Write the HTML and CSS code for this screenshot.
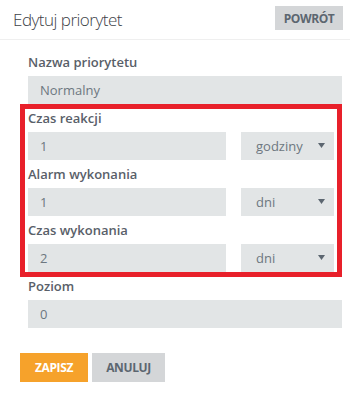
FILE: index.html
```html
<!DOCTYPE html>
<html lang="pl">
<head>
<meta charset="utf-8">
<title>Edytuj priorytet</title>
<link rel="stylesheet" href="styles.css">
</head>
<body>
<div class="panel">
  <div class="header">
    <h1 class="title">Edytuj priorytet</h1>
    <button class="btn btn-back" type="button">POWRÓT</button>
  </div>
  <form class="form">
    <div class="field">
      <label class="label">Nazwa priorytetu</label>
      <input class="input" type="text" value="Normalny" readonly>
    </div>
    <div class="highlight">
      <div class="field">
        <label class="label">Czas reakcji</label>
        <div class="row">
          <input class="input" type="text" value="1" readonly>
          <div class="select"><span>godziny</span><svg class="caret" width="7" height="5" viewBox="0 0 7 5"><path d="M0 0H7L3.5 5Z"/></svg></div>
        </div>
      </div>
      <div class="field">
        <label class="label">Alarm wykonania</label>
        <div class="row">
          <input class="input" type="text" value="1" readonly>
          <div class="select"><span>dni</span><svg class="caret" width="7" height="5" viewBox="0 0 7 5"><path d="M0 0H7L3.5 5Z"/></svg></div>
        </div>
      </div>
      <div class="field">
        <label class="label">Czas wykonania</label>
        <div class="row">
          <input class="input" type="text" value="2" readonly>
          <div class="select"><span>dni</span><svg class="caret" width="7" height="5" viewBox="0 0 7 5"><path d="M0 0H7L3.5 5Z"/></svg></div>
        </div>
      </div>
    </div>
    <div class="field">
      <label class="label">Poziom</label>
      <input class="input" type="text" value="0" readonly>
    </div>
    <div class="actions">
      <button class="btn btn-save" type="button">ZAPISZ</button>
      <button class="btn btn-cancel" type="button">ANULUJ</button>
    </div>
  </form>
</div>
</body>
</html>
```

FILE: styles.css
```css
* { box-sizing: border-box; }
html, body { margin: 0; padding: 0; background: #ffffff; }
body { font-family: "Open Sans", "Noto Sans", sans-serif; width: 350px; height: 404px; overflow: hidden; }

.header {
  display: flex;
  justify-content: space-between;
  align-items: flex-start;
  height: 40px;
  padding: 6px 7px 0 13px;
  border-bottom: 1px solid #efefef;
}
.title {
  margin: 2px 0 0;
  font-size: 17px;
  line-height: 24px;
  letter-spacing: -0.5px;
  font-weight: 300;
  color: #3d4247;
}

.btn {
  border: 0;
  font-family: "Open Sans", sans-serif;
  font-weight: 700;
  font-size: 12px;
  letter-spacing: -0.4px;
  cursor: pointer;
  padding: 0;
}
.btn-back {
  width: 68px;
  height: 24px;
  background: #d4d6d8;
  color: #5c6670;
}

.form {
  display: flex;
  flex-direction: column;
  padding: 13px 8px 0 20px;
}
.form > .field { padding: 0 0 0 8px; }

.field { display: flex; flex-direction: column; }
.label {
  font-size: 13px;
  line-height: 18px;
  font-weight: 600;
  color: #596069;
  margin-bottom: 5px;
}
.input {
  height: 28px;
  border: 0;
  background: #e2e5e6;
  padding: 0 12px;
  font-family: "Open Sans", sans-serif;
  font-size: 13px;
  color: #6d7780;
  outline: none;
  width: 100%;
}
.highlight {
  border: 5px solid #e8202a;
  padding: 0 3px;
  display: flex;
  flex-direction: column;
  gap: 5px;
}
.row {
  display: flex;
  gap: 15px;
}
.row .input { width: 198px; flex: none; }
.select {
  flex: 1;
  height: 28px;
  background: #e2e5e6;
  display: flex;
  align-items: center;
  justify-content: space-between;
  padding: 0 9px 0 15px;
  font-size: 13px;
  color: #6d7780;
}
.caret { fill: #5c6670; margin-top: -1px; }

.actions {
  display: flex;
  gap: 4px;
  margin-top: 25px;
}
.btn-save {
  width: 68px;
  height: 29px;
  background: #f6a22b;
  color: #ffffff;
}
.btn-cancel {
  width: 73px;
  height: 29px;
  background: #d4d6d8;
  color: #5c6670;
}
```
